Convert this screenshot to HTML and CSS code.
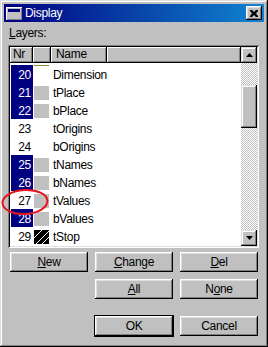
FILE: index.html
```html
<!DOCTYPE html>
<html lang="en">
<head>
  <meta charset="UTF-8">
  <title>Display</title>
  <link rel="stylesheet" href="styles.css">
</head>
<body>
  <div class="window">
    <div class="titlebar">
      <svg class="app-icon" width="16" height="13" viewBox="0 0 16 13">
        <rect x="0" y="0" width="16" height="13" fill="#fff"/>
        <rect x="1" y="1" width="15" height="12" fill="#808080"/>
        <rect x="1" y="1" width="14" height="11" fill="#c0c0c0"/>
        <rect x="2" y="2" width="12" height="3" fill="#000080"/>
      </svg>
      <span class="title">Display</span>
      <button class="close" type="button">
        <svg width="8" height="7" viewBox="0 0 8 7">
          <path d="M0 0h2l2 2 2-2h2v1l-2 2.5 2 2.5v1h-2l-2-2-2 2h-2v-1l2-2.5-2-2.5z" fill="#000"/>
        </svg>
      </button>
    </div>

    <div class="content">
      <div class="label"><u>L</u>ayers:</div>

      <div class="listbox">
        <div class="list">
          <div class="header">
            <div class="hcell h-nr">Nr</div>
            <div class="hcell h-col"></div>
            <div class="hcell h-name">Name</div>
            <div class="hcell h-fill"></div>
          </div>
          <div class="rows">
            <div class="row sel"><span class="nr">20</span><span class="col"><i class="sw sw-line"></i></span><span class="name">Dimension</span></div>
            <div class="row sel"><span class="nr">21</span><span class="col"><i class="sw"></i></span><span class="name">tPlace</span></div>
            <div class="row sel"><span class="nr">22</span><span class="col"><i class="sw"></i></span><span class="name">bPlace</span></div>
            <div class="row"><span class="nr">23</span><span class="col"></span><span class="name">tOrigins</span></div>
            <div class="row"><span class="nr">24</span><span class="col"></span><span class="name">bOrigins</span></div>
            <div class="row sel"><span class="nr">25</span><span class="col"><i class="sw"></i></span><span class="name">tNames</span></div>
            <div class="row sel"><span class="nr">26</span><span class="col"><i class="sw"></i></span><span class="name">bNames</span></div>
            <div class="row"><span class="nr">27</span><span class="col"><i class="sw"></i></span><span class="name">tValues</span></div>
            <div class="row sel"><span class="nr">28</span><span class="col"><i class="sw"></i></span><span class="name">bValues</span></div>
            <div class="row"><span class="nr">29</span><span class="col">
              <svg class="sw-hatch" width="15" height="14" viewBox="0 0 15 14">
                <rect width="15" height="14" fill="#000"/>
                <path d="M0 8L8 0M2 14L15 1M8 14L15 7" stroke="#fff" stroke-width="1"/>
              </svg>
            </span><span class="name">tStop</span></div>
          </div>
        </div>

        <div class="scroll">
          <div class="sbtn">
            <svg width="7" height="4" viewBox="0 0 7 4"><path d="M3.5 0L7 4H0z" fill="#000"/></svg>
          </div>
          <div class="track track-top"></div>
          <div class="thumb"></div>
          <div class="track track-rest"></div>
          <div class="sbtn">
            <svg width="7" height="4" viewBox="0 0 7 4"><path d="M0 0H7L3.5 4z" fill="#000"/></svg>
          </div>
        </div>
      </div>

      <div class="buttons">
        <button class="btn" type="button"><u>N</u>ew</button>
        <button class="btn" type="button"><u>C</u>hange</button>
        <button class="btn" type="button"><u>D</u>el</button>
        <button class="btn col2" type="button"><u>A</u>ll</button>
        <button class="btn col3" type="button">N<u>o</u>ne</button>
        <button class="btn col2 last default" type="button">OK</button>
        <button class="btn col3 last" type="button">Cancel</button>
      </div>
    </div>

    <svg class="mark" width="50" height="30" viewBox="0 0 50 30">
      <ellipse cx="24" cy="14" rx="22.5" ry="12" fill="none" stroke="#e8141c" stroke-width="2" transform="rotate(-3 24 14)"/>
    </svg>
  </div>
</body>
</html>
```

FILE: styles.css
```css
body {
  margin: 0;
  font-family: "Liberation Sans", Arial, sans-serif;
  font-size: 12px;
  letter-spacing: -0.3px;
}
.window {
  position: relative;
  width: 268px;
  height: 347px;
  box-sizing: border-box;
  padding: 4px;
  background: #c0c0c0;
  box-shadow: inset -1px -1px #000, inset 1px 1px #dfdfdf,
              inset -2px -2px #808080, inset 2px 2px #fff;
}
.titlebar {
  display: flex;
  align-items: center;
  height: 18px;
  background: linear-gradient(to right, #000080, #1084d0);
  color: #fff;
}
.app-icon {
  margin-left: 2px;
  display: block;
}
.title {
  margin-left: 3px;
  flex: 1;
  line-height: 18px;
}
.close {
  width: 16px;
  height: 14px;
  margin-right: 2px;
  padding: 0;
  border: none;
  display: flex;
  align-items: center;
  justify-content: center;
  background: #c0c0c0;
  box-shadow: inset -1px -1px #000, inset 1px 1px #fff,
              inset -2px -2px #808080, inset 2px 2px #dfdfdf;
}
.close svg {
  display: block;
  margin-left: -1px;
}
.content {
  padding: 4px 4px 0;
}
.label {
  line-height: 14px;
  padding-left: 1px;
}
.listbox {
  display: flex;
  width: 251px;
  height: 203px;
  box-sizing: border-box;
  margin-top: 5px;
  padding: 2px;
  background: #fff;
  box-shadow: inset 1px 1px #808080, inset -1px -1px #fff,
              inset 2px 2px #000, inset -2px -2px #dfdfdf;
}
.list {
  flex: 1;
  overflow: hidden;
}
.header {
  display: flex;
  height: 16px;
}
.hcell {
  height: 16px;
  box-sizing: border-box;
  line-height: 15px;
  padding-left: 3px;
  background: #c0c0c0;
  box-shadow: inset -1px -1px #000, inset 1px 1px #fff, inset -2px -2px #808080;
}
.h-nr { width: 23px; }
.h-col { width: 18px; }
.h-name { width: 56px; padding-left: 5px; }
.h-fill { flex: 1; }
.rows {
  margin-top: 2px;
}
.row {
  display: flex;
  height: 18px;
  margin-left: 1px;
}
.row .nr {
  width: 22px;
  box-sizing: border-box;
  padding: 3px 2px 0 0;
  line-height: 15px;
  text-align: right;
}
.row.sel .nr {
  background: #000080;
  color: #fff;
}
.row .col {
  width: 18px;
}
.row .name {
  padding: 3px 0 0 2px;
  line-height: 15px;
}
.sw {
  display: block;
  width: 15px;
  height: 14px;
  margin: 3px 0 0 1px;
  background: #c0c0c0;
}
.sw.sw-line {
  height: 1px;
  margin-top: 0;
  background: #8c8c38;
}
.sw-hatch {
  display: block;
  margin: 3px 0 0 1px;
}
.scroll {
  width: 16px;
  display: flex;
  flex-direction: column;
}
.sbtn, .thumb {
  background: #c0c0c0;
  box-shadow: inset -1px -1px #000, inset 1px 1px #dfdfdf,
              inset -2px -2px #808080, inset 2px 2px #fff;
}
.sbtn {
  height: 16px;
  display: flex;
  align-items: center;
  justify-content: center;
}
.thumb {
  height: 43px;
}
.track {
  background: repeating-conic-gradient(#c0c0c0 0 25%, #fff 0 50%) 0 0 / 2px 2px;
}
.track-top { height: 22px; }
.track-rest { flex: 1; }
.buttons {
  display: grid;
  grid-template-columns: repeat(3, 78px);
  grid-template-rows: 20px 20px 3px 20px;
  column-gap: 7px;
  row-gap: 7px;
  margin: 4px 0 0 2px;
}
.btn {
  font: inherit;
  letter-spacing: inherit;
  color: #000;
  padding: 0;
  border: none;
  background: #c0c0c0;
  box-shadow: inset -1px -1px #000, inset 1px 1px #fff,
              inset -2px -2px #808080, inset 2px 2px #dfdfdf;
}
.btn.col2 {
  grid-column-start: 2;
}
.btn.col3 {
  grid-column-start: 3;
}
.btn.last {
  grid-row-start: 4;
}
.btn.default {
  border: 1px solid #000;
  margin: -1px;
}
.mark {
  position: absolute;
  left: 1px;
  top: 188px;
}
```
